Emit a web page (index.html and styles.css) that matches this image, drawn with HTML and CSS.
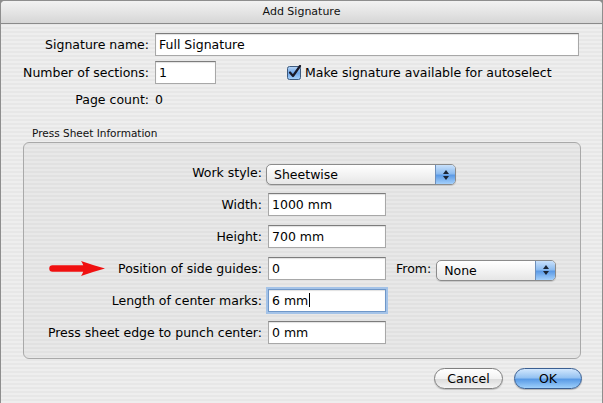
FILE: index.html
```html
<!DOCTYPE html>
<html>
<head>
<meta charset="utf-8">
<title>Add Signature</title>
<link rel="stylesheet" href="styles.css">
</head>
<body>
<div class="window">
  <div class="titlebar">Add Signature</div>
  <div class="content">
    <div class="top-grid">
      <label class="lbl">Signature name:</label>
      <div class="field-cell"><div class="input wide">Full Signature</div></div>
      <label class="lbl">Number of sections:</label>
      <div class="field-cell">
        <div class="input small">1</div>
        <div class="check">
          <svg class="checkbox" width="15" height="15" viewBox="0 0 15 15">
            <defs>
              <linearGradient id="cbg" x1="0" y1="0" x2="0" y2="1">
                <stop offset="0" stop-color="#b9d6f6"/>
                <stop offset="0.5" stop-color="#6fa6e8"/>
                <stop offset="1" stop-color="#a9d2fb"/>
              </linearGradient>
            </defs>
            <rect x="0.5" y="1.5" width="13" height="13" rx="2" fill="url(#cbg)" stroke="#3d5a7e"/>
            <path d="M3 7.5 L6 11 L13 1" fill="none" stroke="#1a1a2a" stroke-width="2.2" stroke-linecap="round" stroke-linejoin="round"/>
          </svg>
          <span>Make signature available for autoselect</span>
        </div>
      </div>
      <label class="lbl page">Page count:</label>
      <div class="page-val">0</div>
    </div>

    <div class="legend">Press Sheet Information</div>
    <div class="group">
      <svg class="arrow" width="58" height="18" viewBox="0 0 58 18">
        <path d="M3.5 9.5 L38 9.5" stroke="#f01010" stroke-width="6.5" stroke-linecap="round"/>
        <path d="M32 2 C40 5 48 7 56 9.5 C48 12 40 14 32 17 C35.5 13 35.5 6 32 2 Z" fill="#f01010"/>
      </svg>
      <label class="lbl">Work style:</label>
      <div class="span2">
        <div class="popup ws"><span class="ptext">Sheetwise</span><span class="pbtn"><i class="up"></i><i class="down"></i></span></div>
      </div>

      <label class="lbl">Width:</label>
      <div class="input">1000 mm</div>
      <div></div>

      <label class="lbl">Height:</label>
      <div class="input">700 mm</div>
      <div></div>

      <label class="lbl">Position of side guides:</label>
      <div class="input">0</div>
      <div class="from">
        <label class="lbl">From:</label>
        <div class="popup fr"><span class="ptext">None</span><span class="pbtn"><i class="up"></i><i class="down"></i></span></div>
      </div>

      <label class="lbl">Length of center marks:</label>
      <div class="input focus">6 mm<span class="caret"></span></div>
      <div></div>

      <label class="lbl">Press sheet edge to punch center:</label>
      <div class="input">0 mm</div>
      <div></div>
    </div>

    <div class="buttons">
      <div class="btn cancel">Cancel</div>
      <div class="btn ok">OK</div>
    </div>
  </div>
</div>
</body>
</html>
```

FILE: styles.css
```css
html, body {
  margin: 0;
  padding: 0;
  background: #8c8c8c;
}
body {
  width: 603px;
  height: 403px;
  overflow: hidden;
  font-family: "DejaVu Sans", "Liberation Sans", sans-serif;
  font-size: 12.5px;
  color: #000;
}
.window {
  width: 601px;
  height: 402px;
  border: 1px solid #8e8e8e;
  border-bottom: none;
  border-radius: 5px 5px 0 0;
  overflow: hidden;
  background: repeating-linear-gradient(to bottom, #eeeeee 0, #eeeeee 2px, #e7e7e7 2px, #e7e7e7 4px);
}
.titlebar {
  height: 22px;
  line-height: 22px;
  text-align: center;
  font-size: 11px;
  color: #111;
  background: linear-gradient(to bottom, #f2f2f2 0%, #e6e6e6 45%, #d6d6d6 100%);
  border-bottom: 1px solid #8a8a8a;
}
.content {
  padding-top: 9px;
}
.top-grid {
  display: grid;
  grid-template-columns: 148px 1fr;
  column-gap: 6px;
  row-gap: 5px;
  align-items: center;
}
.lbl {
  text-align: right;
  white-space: nowrap;
}
.field-cell {
  display: flex;
  align-items: center;
}
.input {
  box-sizing: border-box;
  height: 23px;
  width: 118px;
  background: #fff;
  border: 1px solid #a8a8a8;
  border-top-color: #7c7c7c;
  box-shadow: inset 0 1px 1px rgba(0, 0, 0, 0.12);
  padding-left: 3px;
  line-height: 21px;
  white-space: nowrap;
}
.input.wide { width: 424px; }
.input.small { width: 61px; }
.input.focus {
  border: 1px solid #6f97c8;
  box-shadow: 0 0 0 2px #a4c3e8, inset 0 1px 1px rgba(0, 0, 0, 0.12);
}
.caret {
  display: inline-block;
  width: 1px;
  height: 14px;
  background: #000;
  vertical-align: -2px;
  margin-left: 1px;
}
.check {
  display: flex;
  align-items: center;
  margin-left: 71px;
  gap: 3px;
}
.checkbox { flex: none; }
.page { margin-top: 3px; }
.page-val { margin-top: 3px; }

.legend {
  margin: 19px 0 0 31px;
  font-size: 10.5px;
  line-height: 14px;
  color: #111;
}
.group {
  position: relative;
  box-sizing: border-box;
  margin: 2px 0 0 22px;
  width: 558px;
  height: 217px;
  border: 1px solid #a9a9a9;
  border-radius: 6px;
  background: rgba(0, 0, 0, 0.025);
  padding: 18px 0 14px 0;
  display: grid;
  grid-template-columns: 238px 118px 1fr;
  grid-auto-rows: 23px;
  column-gap: 6px;
  row-gap: 9px;
  align-items: center;
}
.arrow {
  position: absolute;
  left: 25px;
  top: 116px;
}
.span2 {
  grid-column: 2 / 4;
  align-self: start;
}
.from {
  display: flex;
  align-items: center;
  margin-left: 4px;
  gap: 5px;
}
.popup {
  box-sizing: border-box;
  height: 21px;
  border: 1px solid #8b8b8b;
  border-radius: 5px;
  background: linear-gradient(to bottom, #ffffff 0%, #f3f3f3 50%, #e6e6e6 100%);
  display: flex;
  align-items: stretch;
  overflow: hidden;
  box-shadow: 0 1px 1px rgba(0, 0, 0, 0.15);
}
.popup.ws {
  width: 190px;
  margin-left: -2px;
  margin-top: 3px;
}
.popup.fr {
  width: 120px;
  margin-top: 3px;
}
.ptext {
  flex: 1;
  padding-left: 7px;
  line-height: 19px;
}
.pbtn {
  width: 19px;
  border-left: 1px solid #6d8fbb;
  background: linear-gradient(to bottom, #c9e1fb 0%, #8dbcf0 45%, #5d9be6 55%, #a4d0fb 100%);
  display: flex;
  flex-direction: column;
  align-items: center;
  justify-content: center;
  gap: 2px;
}
.pbtn i {
  display: block;
  width: 0;
  height: 0;
  border-left: 3px solid transparent;
  border-right: 3px solid transparent;
}
.pbtn .up { border-bottom: 4px solid #1b2535; }
.pbtn .down { border-top: 4px solid #1b2535; }

.buttons {
  display: flex;
  justify-content: flex-end;
  gap: 11px;
  padding-right: 20px;
  margin-top: 9px;
}
.btn {
  box-sizing: border-box;
  height: 21px;
  line-height: 19px;
  text-align: center;
  border-radius: 11px;
}
.btn.cancel {
  width: 69px;
  border: 1px solid #7f7f7f;
  background: linear-gradient(to bottom, #ffffff 0%, #f2f2f2 50%, #dcdcdc 55%, #f4f4f4 100%);
  box-shadow: 0 1px 1px rgba(0, 0, 0, 0.2);
}
.btn.ok {
  width: 68px;
  border: 1px solid #3a5f92;
  background: linear-gradient(to bottom, #d2e7fd 0%, #96c3f2 45%, #5a9be6 55%, #9ed0fb 100%);
  box-shadow: 0 1px 1px rgba(0, 0, 0, 0.25);
}
```
